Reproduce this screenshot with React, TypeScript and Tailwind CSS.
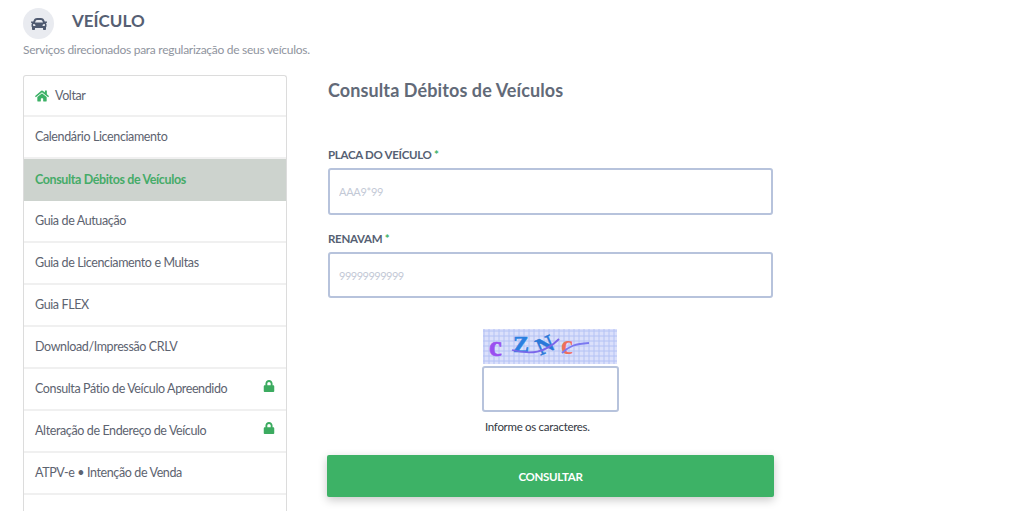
import { FaCar, FaHome, FaLock } from "react-icons/fa";

const menu = [
  { label: "Calendário Licenciamento" },
  { label: "Consulta Débitos de Veículos", active: true },
  { label: "Guia de Autuação" },
  { label: "Guia de Licenciamento e Multas" },
  { label: "Guia FLEX" },
  { label: "Download/Impressão CRLV" },
  { label: "Consulta Pátio de Veículo Apreendido", locked: true },
  { label: "Alteração de Endereço de Veículo", locked: true },
  { label: "ATPV-e • Intenção de Venda" },
  { label: "" },
];

function Captcha() {
  const lines = Array.from({ length: 27 }, (_, i) => i * 5 + 1);
  const rows = Array.from({ length: 7 }, (_, i) => i * 5 + 2);
  return (
    <svg width="134" height="35" viewBox="0 0 134 35" className="block">
      <rect width="134" height="35" fill="#dbe0fb" />
      {lines.map((x) => (
        <line key={x} x1={x} y1="0" x2={x} y2="35" stroke="#b4c2f4" strokeWidth="1" />
      ))}
      {rows.map((y) => (
        <line key={y} x1="0" y1={y} x2="134" y2={y} stroke="#b4c2f4" strokeWidth="1" />
      ))}
      <text x="6" y="27" fontFamily="Liberation Serif, serif" fontWeight="700" fontSize="29" fill="#9a4ff0" stroke="#9a4ff0" strokeWidth="0.6">c</text>
      <text x="30" y="23" fontFamily="Liberation Serif, serif" fontWeight="700" fontSize="24" fill="#2a7fe0" stroke="#2a7fe0" strokeWidth="0.6">Z</text>
      <text x="53" y="23" fontFamily="Liberation Serif, serif" fontWeight="700" fontSize="24" fill="#2a78d8" stroke="#2a78d8" strokeWidth="0.4" transform="rotate(-24 64 15)">N</text>
      <text x="78" y="25" fontFamily="Liberation Serif, serif" fontWeight="700" fontSize="27" fill="#ee6f5c">c</text>
      <path d="M29 21 C48 26 62 24 76 10" fill="none" stroke="#7a66ea" strokeWidth="1.8" />
      <path d="M79 24 C86 17 92 15 106 14" fill="none" stroke="#7a78f0" strokeWidth="1.8" />
    </svg>
  );
}

export default function App() {
  return (
    <div className="h-[511px] overflow-hidden bg-white font-['Lato','Liberation_Sans',sans-serif] text-[#5d6370]">
      <header className="pl-[23px] pt-[8px]">
        <div className="flex items-center">
          <div className="flex h-[31px] w-[31px] items-center justify-center rounded-full bg-[#e9ebf0]">
            <FaCar className="h-[16px] w-[16px] text-[#4f5a70]" />
          </div>
          <h1 className="ml-[18px] -mt-[5px] text-[17px] leading-[26px] font-bold text-[#565f73]">VEÍCULO</h1>
        </div>
        <p className="mt-[2px] text-[12px] leading-[17px] tracking-[-0.28px] text-[#8f949e]">
          Serviços direcionados para regularização de seus veículos.
        </p>
      </header>

      <div className="mt-[17px] flex pl-[23px]">
        <nav className="w-[264px] shrink-0 rounded-t-[3px] border border-[#dcdcdc] border-b-0">
          <a className="flex h-[41px] items-center gap-[6px] border-b-2 border-[#f0f0f0] pt-[1px] pl-[11px] text-[12.5px] tracking-[-0.38px]">
            <FaHome className="h-[14px] w-[14px] text-[#3cb166]" />
            Voltar
          </a>
          {menu.map((item, i) => (
            <a
              key={i}
              className={
                item.active
                  ? "flex h-[42px] items-center bg-[#cdd3ce] pl-[11px] text-[12.5px] font-bold tracking-[-0.38px] text-[#45ab68]"
                  : "relative flex h-[42px] items-center border-b-2 border-[#f0f0f0] pt-[1px] pl-[11px] text-[12.5px] tracking-[-0.38px]"
              }
            >
              {item.label}
              {item.locked && (
                <FaLock className="absolute right-[11px] top-[11px] h-[12px] w-[12px] text-[#3cab60]" />
              )}
            </a>
          ))}
        </nav>

        <main className="ml-[40px] w-[447px]">
          <h2 className="mt-[3px] ml-[1px] text-[18px] leading-[24px] font-bold tracking-[0.1px] text-[#626a78]">
            Consulta Débitos de Veículos
          </h2>

          <label className="mt-[44px] ml-[1px] block text-[11.5px] leading-[18px] font-bold tracking-[-0.3px] text-[#565f73]">
            PLACA DO VEÍCULO <span className="text-[#3cb166]">*</span>
          </label>
          <input
            placeholder="AAA9*99"
            className="mt-[4px] ml-[1px] block h-[47px] w-[445px] rounded-[3px] border-2 border-[#b7c3dc] pl-[9px] text-[11px] tracking-[-0.3px] placeholder:text-[#c3c9d6]"
          />

          <label className="mt-[15px] ml-[1px] block text-[11.5px] leading-[18px] font-bold tracking-[-0.3px] text-[#565f73]">
            RENAVAM <span className="text-[#3cb166]">*</span>
          </label>
          <input
            placeholder="99999999999"
            className="mt-[4px] ml-[1px] block h-[46px] w-[445px] rounded-[3px] border-2 border-[#b7c3dc] pl-[9px] text-[11px] tracking-[-0.5px] placeholder:text-[#c3c9d6]"
          />

          <div className="mt-[31px] ml-[155px]">
            <div className="ml-[1px]">
              <Captcha />
            </div>
            <input className="mt-[2px] block h-[46px] w-[137px] rounded-[3px] border-2 border-[#b7c3dc]" />
            <p className="mt-[7px] ml-[3px] text-[11.5px] leading-[16px] tracking-[-0.3px] text-[#333842]">Informe os caracteres.</p>
          </div>

          <button className="mt-[20px] flex h-[42px] w-[447px] items-center justify-center rounded-[2px] bg-[#3db266] pt-[1px] text-[11.5px] font-bold tracking-[-0.3px] text-white shadow-[0_3px_10px_rgba(0,0,0,0.22)]">
            CONSULTAR
          </button>
        </main>
      </div>
    </div>
  );
}
